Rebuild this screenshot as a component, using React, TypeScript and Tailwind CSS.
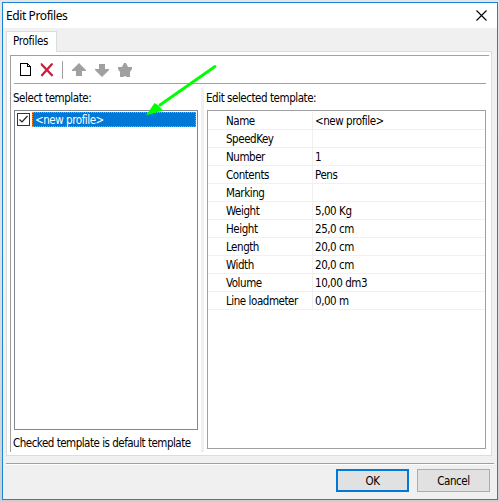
import { useState } from "react";

interface Field {
  label: string;
  value: string;
}

const fields: Field[] = [
  { label: "Name", value: "<new profile>" },
  { label: "SpeedKey", value: "" },
  { label: "Number", value: "1" },
  { label: "Contents", value: "Pens" },
  { label: "Marking", value: "" },
  { label: "Weight", value: "5,00 Kg" },
  { label: "Height", value: "25,0 cm" },
  { label: "Length", value: "20,0 cm" },
  { label: "Width", value: "20,0 cm" },
  { label: "Volume", value: "10,00 dm3" },
  { label: "Line loadmeter", value: "0,00 m" },
];

function Toolbar() {
  return (
    <div className="mr-[3px] ml-[3px] flex h-7 items-start border-b border-[#a0a0a0] pt-[5px]">
      <button className="ml-[5px] h-[18px] w-[14px]" aria-label="New">
        <svg width="14" height="18" viewBox="0 0 14 18" fill="none" stroke="#000" shapeRendering="crispEdges">
          <path d="M1.5 2.500h7l3 3v9h-10z" />
          <path d="M8.500 2.500v3h3" />
        </svg>
      </button>
      <button className="ml-[7px] h-[18px] w-[14px]" aria-label="Delete">
        <svg width="14" height="18" viewBox="0 0 14 18" fill="none">
          <path d="M1.500 3.500 12.500 15M12 3 1.500 15" stroke="#8c6068" strokeWidth="2.2" />
          <path d="M1 2.500 12.500 14.500M12.500 2.500 1.500 14.500" stroke="#dc143c" strokeWidth="1.800" />
        </svg>
      </button>
      <div className="ml-[8px] h-[18px] w-px bg-[#a0a0a0]" />
      <button className="ml-[9px] h-[18px] w-[14px]" aria-label="Move up">
        <svg width="14" height="18" viewBox="0 0 14 18" fill="#a0a0a0">
          <path d="M7 2 14 9v1h-4v5H4v-5H0V9z" />
        </svg>
      </button>
      <button className="ml-[9px] h-[18px] w-[14px]" aria-label="Move down">
        <svg width="14" height="18" viewBox="0 0 14 18" fill="#a0a0a0">
          <path d="M4 3h6v5h4v1l-7 7-7-7V8h4z" />
        </svg>
      </button>
      <button className="ml-[9px] h-[18px] w-[14px]" aria-label="Default">
        <svg width="14" height="18" viewBox="0 0 14 18" fill="#a0a0a0">
          <path d="M6 2h2l2 4h4v2l-2 3v5H9l-2-1-2 1H2v-5L0 8V6h4z" />
        </svg>
      </button>
    </div>
  );
}

export default function App() {
  const [checked, setChecked] = useState(true);

  return (
    <main className="h-[502px] w-[499px] bg-gradient-to-b from-[#e6e6e6] via-[#e2e2e2] to-[#cfcfcf] p-[2px] font-['DejaVu_Sans_Condensed','DejaVu_Sans',sans-serif] text-[11.5px] tracking-[-0.45px] text-black">
      <div className="flex h-[498px] w-[496px] flex-col border border-[#1883d7] bg-[#f0f0f0]">
        {/* Title bar */}
        <div className="flex h-[25px] shrink-0 items-center justify-between bg-white pr-[10px] pl-[3px]">
          <h1 className="font-['Noto_Sans',sans-serif] text-[12px] tracking-[-0.4px]">Edit Profiles</h1>
          <button aria-label="Close">
            <svg width="11" height="11" viewBox="0 0 11 11" fill="none" stroke="#000" strokeWidth="1.1">
              <path d="M.5.5l10 10M10.5.5l-10 10" />
            </svg>
          </button>
        </div>

        {/* Tab */}
        <div className="mt-[3px] ml-[3px] flex h-5 shrink-0">
          <div className="relative z-10 -mb-px h-[21px] w-[51px] border border-b-0 border-[#dcdcdc] bg-white pl-[6px] leading-[19px] tracking-[-0.3px] whitespace-nowrap">
            Profiles
          </div>
        </div>

        {/* Tab page */}
        <div className="ml-[3px] h-[405px] w-[486px] shrink-0 border border-[#dcdcdc] bg-white p-[3px]">
          <div className="h-[397px] w-[479px] border-t border-l border-[#a0a0a0]">
            <Toolbar />
            <div className="flex h-[368px] pl-[3px] whitespace-nowrap">
              <section className="w-[184px] shrink-0">
                <div className="-ml-px h-[26px] pt-[6px] leading-[16px]">Select template:</div>
                <div className="h-[320px] border border-[#828790] p-px">
                  <div className="flex h-[15px]">
                    <button
                      onClick={() => setChecked(!checked)}
                      className="mt-px ml-px h-[13px] w-[13px] shrink-0 border border-[#333] bg-white"
                      aria-label="Default template"
                    >
                      {checked && (
                        <svg width="11" height="11" viewBox="0 0 11 11" fill="none" stroke="#222" strokeWidth="1.2">
                          <path d="M1.5 5.5 4 8l5.5-6" />
                        </svg>
                      )}
                    </button>
                    <div className="ml-[2px] flex-1 border border-dotted border-[#ff8728] bg-[#0078d7] pl-[2px] leading-[15px] text-white">
                      {"<new profile>"}
                    </div>
                  </div>
                </div>
                <div className="-ml-px pt-[5px] leading-[16px] tracking-[-0.5px]">Checked template is default template</div>
              </section>

              {/* Splitter */}
              <div className="mt-[4px] ml-[3px] h-[364px] w-[3px] shrink-0 bg-[#f0f0f0]" />

              <section className="ml-[3px] w-[279px] shrink-0">
                <div className="-ml-px h-[26px] pt-[6px] leading-[16px]">Edit selected template:</div>
                <div className="h-[339px] border border-[#a0a0a0] pt-px">
                  {fields.map((field) => (
                    <div key={field.label} className="flex h-[18px] border-b border-[#f0f0f0] leading-[19px]">
                      <div className="h-[17px] w-[105px] border-r border-[#f0f0f0] pl-[18px]">{field.label}</div>
                      <div className="h-[17px] pl-[2px]">{field.value}</div>
                    </div>
                  ))}
                </div>
              </section>
            </div>
          </div>
        </div>

        {/* Footer */}
        <div className="mt-[7px] ml-[3px] h-[36px] w-[488px] border-t border-[#a0a0a0]">
          <div className="flex h-full justify-end gap-2 border-t border-white pt-1 pr-1">
            <button className="h-[23px] w-[73px] border-2 border-[#0078d7] bg-[#e1e1e1] leading-[21px]">OK</button>
            <button className="h-[23px] w-[73px] border border-[#adadad] bg-[#e1e1e1] leading-[23px]">Cancel</button>
          </div>
        </div>
      </div>

      {/* Pointer to the selected profile */}
      <svg className="pointer-events-none absolute top-[60px] left-[140px]" width="82" height="62" viewBox="0 0 82 62">
        <path d="M75 6.5 20 45" stroke="#0f0" strokeWidth="2.8" strokeLinecap="round" />
        <path d="M6 55.500 14.500 43 18.500 45.500 23 50.500z" fill="#0f0" />
      </svg>
    </main>
  );
}
